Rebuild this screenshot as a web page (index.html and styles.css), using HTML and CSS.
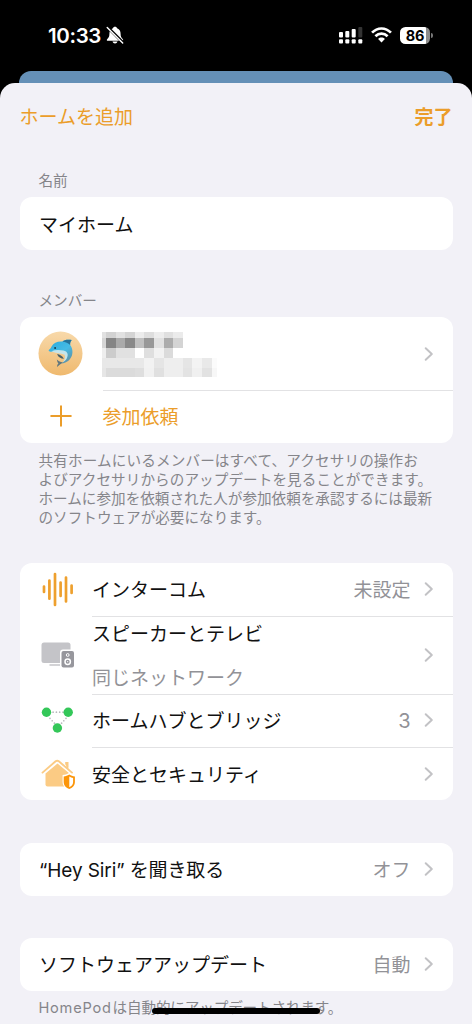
FILE: index.html
```html
<!DOCTYPE html>
<html lang="ja">
<head>
<meta charset="utf-8">
<title>ホーム設定</title>
<link rel="stylesheet" href="styles.css">
</head>
<body>
<svg class="defs" width="0" height="0" aria-hidden="true">
  <symbol id="chevron" viewBox="0 0 10 16"><path d="M1.700 2.300 7.800 8l-6.100 5.700" fill="none" stroke="#c2c2c5" stroke-width="2" stroke-linecap="round" stroke-linejoin="round"/></symbol>
</svg>
<div class="phone">
  <header class="status">
    <div class="clock">
      <span class="time">10:33</span>
      <svg class="bell" viewBox="0 0 18 18">
        <path d="M9 .8c-1.200 0-1.900.7-2.100 1.500C4.300 3.200 3.400 5.300 3.400 8c0 2.800-.8 3.700-2.100 4.900-.9.900-.5 1.900.5 1.900h14.400c1 0 1.400-1 .5-1.900-1.300-1.200-2.100-2.100-2.100-4.900 0-2.700-.9-4.800-3.500-5.700C10.900 1.500 10.200.8 9 .8z" fill="#fff"/>
        <path d="M6.500 15.600h5c-.3 1.300-1.300 2-2.500 2s-2.200-.7-2.500-2z" fill="#fff"/>
        <path d="M1.700 1.300 17 16.600" stroke="#000" stroke-width="3"/>
        <path d="M1.200 1.500 16.700 17" stroke="#fff" stroke-width="1.400" stroke-linecap="round"/>
      </svg>
    </div>
    <div class="indicators">
      <svg class="signal" viewBox="0 0 24 17">
        <g fill="#fff"><rect x="0" y="5" width="4" height="5.500" rx="1"/><rect x="6.300" y="4" width="4" height="6.500" rx="1"/><rect x="12.700" y="2" width="4" height="8.500" rx="1"/><rect x="0" y="12.200" width="4" height="4.300" rx="1"/><rect x="6.300" y="12.200" width="4" height="4.300" rx="1"/><rect x="12.700" y="12.200" width="4" height="4.300" rx="1"/><rect x="19.300" y="12.200" width="4" height="4.300" rx="1"/></g>
        <rect x="19.300" y="0" width="4" height="10.500" rx="1" fill="#333"/>
      </svg>
      <svg class="wifi" viewBox="0 0 20 15">
        <g fill="none" stroke="#fff" stroke-width="2.500"><path d="M1 5.300C6-.1 14-.1 19 5.300"/><path d="M4.200 8.700C7.500 5.300 12.500 5.300 15.800 8.700"/></g>
        <path d="M6.800 11.400c1.800-1.900 4.600-1.900 6.400 0L10 14.700z" fill="#fff"/>
      </svg>
      <div class="battery"><span class="level">86</span><i class="nub"></i></div>
    </div>
  </header>
  <div class="backdrop"></div>
  <main class="sheet">
    <nav class="toolbar"><span>ホームを追加</span><b>完了</b></nav>

    <h2 class="caption">名前</h2>
    <section class="card"><div class="row"><span class="label">マイホーム</span></div></section>

    <h2 class="caption caption-members">メンバー</h2>
    <section class="card">
      <div class="row row-person">
        <svg class="avatar" viewBox="0 0 46 46">
          <defs>
            <linearGradient id="peach" x1="0" y1="0" x2="0" y2="1"><stop offset="0" stop-color="#f8d9aa"/><stop offset="1" stop-color="#efb96e"/></linearGradient>
            <linearGradient id="skin" x1="0" y1="0" x2=".7" y2="1"><stop offset="0" stop-color="#2baadd"/><stop offset=".6" stop-color="#45bbe5"/><stop offset="1" stop-color="#5f93a8"/></linearGradient>
          </defs>
          <circle cx="23" cy="23" r="22.500" fill="url(#peach)"/>
          <path d="M11 19.500c1.200-1 2.200-2 3-3.800 1.800-3.800 6-5.400 11-5 2-1.700 4.700-2.100 9.500-1.600-1.500 1.500-1.800 3.300-1.600 5.300 3.500 4.600 3 11.600-1.200 15.500-2.300 2.200-5 3-8 3.300 3-2 5.200-4.200 5.600-7.300.2-2.300-.7-3.900-2.600-4.500-4.600.3-9.200.1-13.700-.2-1.500-.3-2.500-.8-2-1.700z" fill="url(#skin)"/>
          <path d="M13.500 20.600c4-1.500 8.500-1.500 12.500-.6 4.400.7 5.400 4.500 3.400 8-1 1.700-2.500 3-4 3.800 1.900-2.600 3-5.200 1.700-7.600-3.600-1.800-9-1.400-13.600-3.600z" fill="#c4e4eb"/>
          <path d="M25 10.800c2-1.800 4.700-2.200 9.500-1.700-1.500 1.500-1.800 3.300-1.600 5.300-2-2-4.700-3.200-7.900-3.600z" fill="#25739a"/>
          <path d="M19.500 23.500c2.800.2 5.300 2 7 4.800-3.200 0-5.800-1.400-7-4.800z" fill="#48616a"/>
          <path d="M25.500 31.800c-2 .2-4-.6-6.200-2.600.2 2 .7 3 1.600 4-.9.700-1.300 1.800-1.500 3.500 2.200-1.700 4-2.700 6.100-4.900z" fill="#61777e"/>
          <circle cx="17.500" cy="17.300" r="1" fill="#143c4d"/>
        </svg>
        <svg class="mosaic" viewBox="0 0 115 46" shape-rendering="crispEdges">
          <g fill="#e1e1e1"><rect width="4" height="6"/><rect x="4" width="9.600" height="6" fill="#d2d2d2"/><rect x="13.600" width="9.600" height="6"/><rect x="23.200" width="9.600" height="6" fill="#d4d4d4"/><rect x="32.800" width="9.600" height="6" fill="#ececec"/><rect x="42.400" width="9.600" height="6" fill="#dedede"/><rect x="52" width="9.600" height="6" fill="#ededed"/><rect x="61.600" width="9.600" height="6" fill="#e0e0e0"/><rect x="71.200" width="9.600" height="6" fill="#ebebeb"/></g>
          <rect y="6" width="4" height="10" fill="#d5d5d5"/><rect x="4" y="6" width="9.600" height="10" fill="#858585"/><rect x="13.600" y="6" width="9.600" height="10" fill="#aaa"/><rect x="23.200" y="6" width="9.600" height="10" fill="#898989"/><rect x="32.800" y="6" width="9.600" height="10" fill="#c0c0c0"/><rect x="42.400" y="6" width="9.600" height="10" fill="#989898"/><rect x="52" y="6" width="9.600" height="10" fill="#e1e1e1"/><rect x="61.600" y="6" width="9.600" height="10" fill="#acacac"/><rect x="71.200" y="6" width="9.600" height="10" fill="#d4d4d4"/>
          <rect y="16" width="4" height="10" fill="#eee"/><rect x="4" y="16" width="9.600" height="10" fill="#ccc"/><rect x="13.600" y="16" width="19.200" height="10" fill="#e1e1e1"/><rect x="42.400" y="16" width="9.600" height="10" fill="#dfdfdf"/><rect x="52" y="16" width="9.600" height="10" fill="#f2f2f2"/><rect x="61.600" y="16" width="9.600" height="10" fill="#dbdbdb"/>
          <rect y="26" width="42.400" height="9.500" fill="#e8e8e8"/><rect x="42.400" y="26" width="9.600" height="9.500" fill="#f2f2f2"/><rect x="52" y="26" width="9.600" height="9.500" fill="#e5e5e5"/><rect x="61.600" y="26" width="19.200" height="9.500" fill="#eee"/><rect x="80.800" y="26" width="9.600" height="9.500" fill="#e5e5e5"/><rect x="90.400" y="26" width="9.600" height="9.500" fill="#f3f3f3"/><rect x="100" y="26" width="9.600" height="9.500" fill="#e9e9e9"/><rect x="109.600" y="26" width="5" height="9.500" fill="#fbfbfb"/>
          <rect y="35.500" width="4" height="9.500" fill="#e6e6e6"/><rect x="4" y="35.500" width="28.800" height="9.500" fill="#dbdbdb"/><rect x="32.800" y="35.500" width="9.600" height="9.500" fill="#dedede"/><rect x="42.400" y="35.500" width="9.600" height="9.500" fill="#f1f1f1"/><rect x="52" y="35.500" width="9.600" height="9.500" fill="#e0e0e0"/><rect x="61.600" y="35.500" width="19.200" height="9.500" fill="#eee"/><rect x="80.800" y="35.500" width="9.600" height="9.500" fill="#e3e3e3"/><rect x="90.400" y="35.500" width="9.600" height="9.500" fill="#f0f0f0"/><rect x="100" y="35.500" width="9.600" height="9.500" fill="#e2e2e2"/><rect x="109.600" y="35.500" width="5" height="9.500" fill="#f7f7f7"/>
        </svg>
        <svg class="chevron"><use href="#chevron"/></svg>
      </div>
      <div class="row row-invite">
        <svg class="plus" viewBox="0 0 22 22"><path d="M11 1.200v19.600M1.200 11h19.600" stroke="#eb9d2a" stroke-width="2" stroke-linecap="round"/></svg>
        <span class="label">参加依頼</span>
      </div>
    </section>
    <p class="note"><span class="loose">共有ホームにいるメンバーはすべて、アクセサリの操作お</span><br><span class="semi-loose">よびアクセサリからのアップデートを見ることができます。</span><br>ホームに参加を依頼された人が参加依頼を承認するには最新<br>のソフトウェアが必要になります。</p>

    <section class="card card-features">
      <div class="row feature">
        <svg class="icon" viewBox="0 0 36 36"><g stroke="#eea02e" stroke-width="2.700" stroke-linecap="round"><path d="M4 15.500v5.500M9.400 9.500v18.200M15 3v31M20.600 11.500v13.500M26 6.500v24M31.600 14.500v7.500"/></g></svg>
        <span class="label">インターコム</span><span class="value">未設定</span><svg class="chevron"><use href="#chevron"/></svg>
      </div>
      <div class="row feature feature-tall">
        <svg class="icon" viewBox="0 0 36 36">
          <rect x="1.500" y="5.500" width="29" height="20.500" rx="2.500" fill="#c4c4c8"/>
          <path d="M9.500 28h12" stroke="#c4c4c8" stroke-width="1.500"/>
          <rect x="20" y="12.500" width="15.500" height="19" rx="3" fill="#fff"/>
          <rect x="21.500" y="14" width="12.500" height="16.500" rx="2" fill="#97979d"/>
          <circle cx="27.700" cy="18" r="1.400" fill="#97979d" stroke="#fff" stroke-width="1"/>
          <circle cx="27.700" cy="24.700" r="2.700" fill="#97979d" stroke="#fff" stroke-width="1.500"/><circle cx="27.700" cy="24.700" r=".6" fill="#fff"/>
        </svg>
        <div class="label stack"><span>スピーカーとテレビ</span><span class="sub">同じネットワーク</span></div><svg class="chevron"><use href="#chevron"/></svg>
      </div>
      <div class="row feature">
        <svg class="icon" viewBox="0 0 36 36">
          <g stroke="#b9b9bd" stroke-width="1.700" stroke-linecap="round" stroke-dasharray="0 3.300"><path d="M13.100 10.200h10.500"/><path d="m10 16.300 4.500 5"/><path d="m26 16.300-4.500 5"/></g>
          <g fill="#34c759"><circle cx="6.500" cy="10.200" r="4.700"/><circle cx="28.200" cy="10.200" r="4.700"/><circle cx="17.400" cy="26" r="4.700"/></g>
        </svg>
        <span class="label">ホームハブとブリッジ</span><span class="value count">3</span><svg class="chevron"><use href="#chevron"/></svg>
      </div>
      <div class="row feature">
        <svg class="icon" viewBox="0 0 36 36">
          <path d="M5.500 17.500 17.500 7.500 29.500 17.500V28.500q0 2-2 2h-20q-2 0-2-2z" fill="#fbcb84"/>
          <path d="M25.200 6h3.100v7.500l-3.100-2.600z" fill="#fbcb84"/>
          <path d="M2.500 16.600 15.600 5.300q1.600-1.300 3.200 0L32 16.600" fill="none" stroke="#fff" stroke-width="3.500"/>
          <path d="M26.200 6h2.100v7l-2.100-1.700z" fill="#fbcb84"/>
          <path d="M2.500 16.600 15.600 5.300q1.600-1.300 3.200 0L32 16.600" fill="none" stroke="#fbcb84" stroke-width="1.900" stroke-linecap="round"/>
          <path d="M29.300 16.800c2.300 1.700 4.300 2.100 6.700 2.300v6.900c0 4.200-3.200 6.800-6.700 8.200-3.500-1.400-6.700-4-6.700-8.200v-6.900c2.200-.2 4.400-.6 6.700-2.300z" fill="#fff"/>
          <path d="M29.300 18.600c1.800 1.200 3.500 1.700 5.600 1.900v5.500c0 3.600-2.600 5.800-5.600 7-3-1.200-5.600-3.400-5.600-7v-5.500c2.100-.2 3.800-.7 5.600-1.900z" fill="#fc9509"/>
          <path d="M29.300 20.600c1.300.8 2.500 1.200 3.800 1.400v4.300c0 2.400-1.500 3.800-3.800 4.900z" fill="#fff"/>
        </svg>
        <span class="label">安全とセキュリティ</span><svg class="chevron"><use href="#chevron"/></svg>
      </div>
    </section>

    <section class="card card-siri"><div class="row"><span class="label siri">“Hey Siri” を聞き取る</span><span class="value">オフ</span><svg class="chevron"><use href="#chevron"/></svg></div></section>
    <section class="card card-update"><div class="row"><span class="label">ソフトウェアアップデート</span><span class="value">自動</span><svg class="chevron"><use href="#chevron"/></svg></div></section>
    <p class="note note-update"><span class="product">HomePod</span>は自動的にアップデートされます。</p>
  </main>
  <div class="home-indicator"></div>
</div>
</body>
</html>
```
FILE: styles.css
```css
* { box-sizing: border-box; }
body { margin: 0; background: #000; }
.defs { position: absolute; }
.phone {
  position: relative;
  width: 472px;
  height: 1024px;
  overflow: hidden;
  background: #000;
  color: #111;
  font: 19px/28px Inter, "Noto Sans CJK JP", sans-serif;
}
.phone svg { display: block; flex: none; }

.status { display: flex; justify-content: space-between; height: 71px; padding: 25px 39px 0 48px; }
.clock, .indicators { display: flex; align-items: center; height: 20px; }
.time { padding-top: 1px; color: #fff; font-size: 20.5px; font-weight: 600; line-height: 20px; letter-spacing: -.35px; width: 58px; white-space: nowrap; }
.bell { width: 18px; height: 18px; }
.signal { width: 24px; height: 17px; margin-right: 8px; }
.wifi { width: 21px; height: 16px; margin-right: 8px; }
.battery { display: flex; align-items: center; gap: 1px; }
.level {
  width: 30px; height: 17px; border-radius: 5.5px;
  background: linear-gradient(90deg, #fff 86%, #8c8c8c 86%);
  color: #000; font-size: 14.5px; font-weight: 700; line-height: 17px; text-align: center; letter-spacing: -.2px;
}
.nub { width: 2px; height: 5px; border-radius: 0 3px 3px 0; background: #777; }

.backdrop { height: 24px; margin: 0 19px -12px; border-radius: 12px 12px 0 0; background: #6590b7; }
.sheet { position: relative; height: 941px; padding: 0 19.5px; border-radius: 15px 15px 0 0; background: #f2f1f7; }
.toolbar { display: flex; justify-content: space-between; height: 89px; padding-top: 21px; color: #eb9d2a; }
.toolbar b { font-weight: 700; }

.caption { height: 25px; margin: 0; padding-left: 19px; color: #85858a; font-size: 14.6px; font-weight: 400; line-height: 19px; }
.caption-members { margin-top: 42.3px; }
.card { border-radius: 12px; background: #fff; overflow: hidden; }
.row { display: flex; align-items: center; height: 53px; padding: 0 19px 0 19.5px; }
.chevron { width: 10px; height: 16px; }
.label { flex: 1; padding-top: 4px; white-space: nowrap; }
.siri { letter-spacing: -.1px; }
.value { padding-top: 4px; color: #929297; margin-right: 13px; }
.count { padding-top: 2px; font-size: 20px; }

.row-person { height: 72.5px; }
.avatar { width: 45px; height: 45px; margin-left: -1px; }
.mosaic { width: 115px; height: 46px; margin: 2px auto 0 19px; }
.row-invite { position: relative; padding-left: 30px; color: #eb9d2a; }
.plus { width: 22px; height: 22px; margin-right: 31px; }
.row-invite::before, .feature + .feature::before {
  content: ""; position: absolute; top: 0; right: 0; left: 83px; height: 1px; background: #e2e2e4;
}

.note { margin: 9px 0 0; padding-left: 19px; color: #85858a; font-size: 14.6px; line-height: 19.2px; white-space: nowrap; }
.loose { letter-spacing: .14px; }
.semi-loose { letter-spacing: .07px; }
.card-features { margin-top: 34px; }
.feature { position: relative; height: 53.2px; padding-left: 20.5px; }
.feature-tall { height: 78px; }
.feature + .feature::before { left: 72px; }
.icon { width: 36px; height: 36px; margin-right: 16px; }
.stack { display: flex; flex-direction: column; gap: 15.5px; }
.stack span { line-height: 28px; }
.stack .sub { color: #929297; }
.card-siri { margin-top: 42.5px; }
.card-update { margin-top: 42.3px; }
.note-update { margin-top: 8px; letter-spacing: -.15px; }
.product { margin-right: 1px; letter-spacing: .75px; }
.home-indicator { position: absolute; top: 1008px; left: 152px; width: 168px; height: 6px; border-radius: 3px; background: #000; }
```
